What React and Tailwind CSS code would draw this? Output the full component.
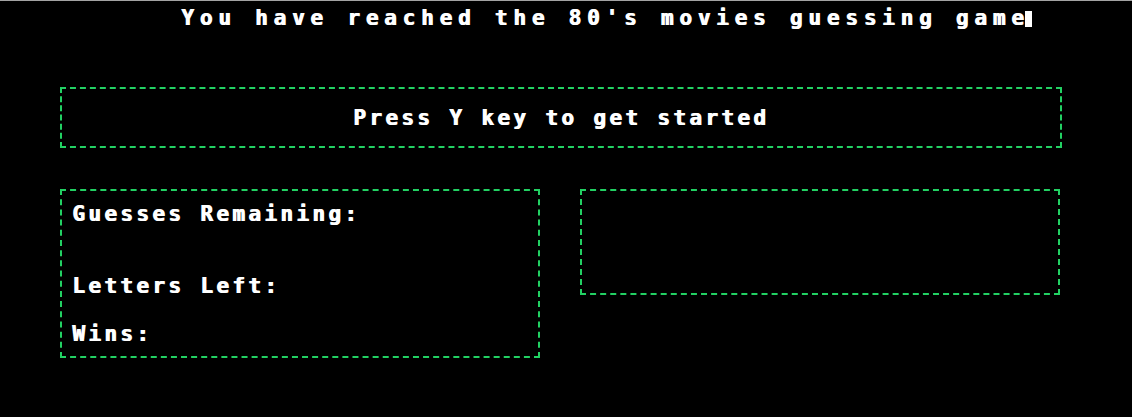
export default function App() {
  const font = { fontFamily: '"DejaVu Sans Mono", "Liberation Mono", monospace' };
  return (
    <div
      className="min-h-[417px] w-full bg-black border-t border-[#a3a3a3] text-white font-bold"
      style={font}
    >
      <div className="pt-[7px] pl-[181px] flex items-start">
        <h1 className="text-[21px] leading-[20px] font-bold tracking-[5.8px] whitespace-pre text-shadow-[1px_0_0_#fff]">
          You have reached the 80's movies guessing game
        </h1>
        <span className="ml-[-4px] mt-[3px] inline-block w-[7px] h-[16px] bg-white" />
      </div>

      <div className="px-[60px]">
        <div className="mt-[59px] w-[1002px] h-[61px] border-2 border-dashed border-[#22d163] flex items-center justify-center">
          <p className="text-[21px] leading-[20px] tracking-[3.36px] whitespace-pre text-shadow-[1px_0_0_#fff]">Press Y key to get started</p>
        </div>

        <div className="mt-[41px] flex gap-[40px] items-start">
          <div className="w-[480px] h-[169px] border-2 border-dashed border-[#22d163] pl-[10px] pt-[13px]">
            <p className="text-[21px] leading-[20px] tracking-[3.36px] whitespace-pre text-shadow-[1px_0_0_#fff]">Guesses Remaining:</p>
            <p className="mt-[52px] text-[21px] leading-[20px] tracking-[3.36px] whitespace-pre text-shadow-[1px_0_0_#fff]">Letters Left:</p>
            <p className="mt-[28px] text-[21px] leading-[20px] tracking-[3.36px] whitespace-pre text-shadow-[1px_0_0_#fff]">Wins:</p>
          </div>
          <div className="w-[480px] h-[106px] border-2 border-dashed border-[#22d163]" />
        </div>
      </div>
    </div>
  );
}
